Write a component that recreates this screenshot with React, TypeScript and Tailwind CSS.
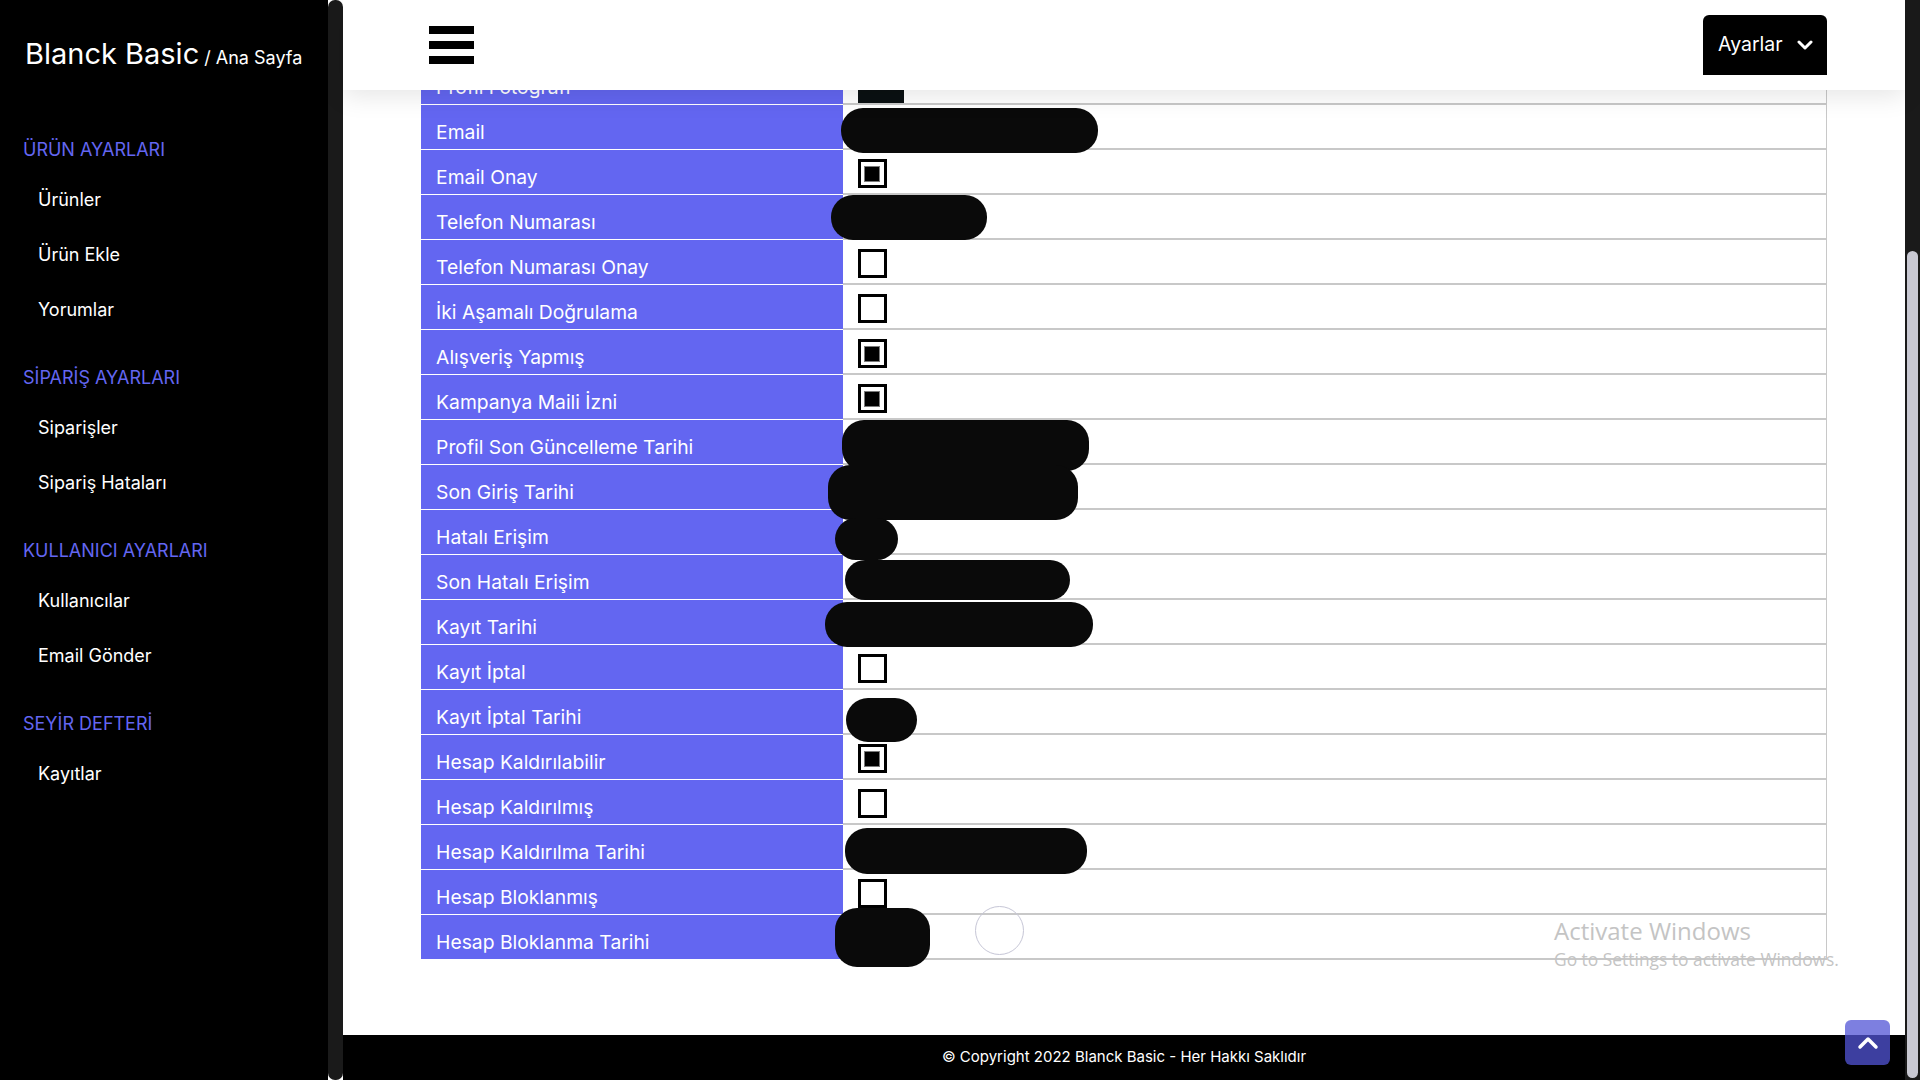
import React from "react";

type Row = {
  label: string;
  kind: "photo" | "text" | "check";
  checked?: boolean;
};

const rows: Row[] = [
  { label: "Profil Fotoğrafı", kind: "photo" },
  { label: "Email", kind: "text" },
  { label: "Email Onay", kind: "check", checked: true },
  { label: "Telefon Numarası", kind: "text" },
  { label: "Telefon Numarası Onay", kind: "check", checked: false },
  { label: "İki Aşamalı Doğrulama", kind: "check", checked: false },
  { label: "Alışveriş Yapmış", kind: "check", checked: true },
  { label: "Kampanya Maili İzni", kind: "check", checked: true },
  { label: "Profil Son Güncelleme Tarihi", kind: "text" },
  { label: "Son Giriş Tarihi", kind: "text" },
  { label: "Hatalı Erişim", kind: "text" },
  { label: "Son Hatalı Erişim", kind: "text" },
  { label: "Kayıt Tarihi", kind: "text" },
  { label: "Kayıt İptal", kind: "check", checked: false },
  { label: "Kayıt İptal Tarihi", kind: "text" },
  { label: "Hesap Kaldırılabilir", kind: "check", checked: true },
  { label: "Hesap Kaldırılmış", kind: "check", checked: false },
  { label: "Hesap Kaldırılma Tarihi", kind: "text" },
  { label: "Hesap Bloklanmış", kind: "check", checked: false },
  { label: "Hesap Bloklanma Tarihi", kind: "text" },
];

// redacted values in the screenshot (left, top, width, height relative to table)
const blots = [
  [420, 48, 257, 45],
  [410, 135, 156, 45],
  [421, 360, 247, 51],
  [407, 405, 250, 55],
  [414, 458, 63, 42],
  [424, 500, 225, 40],
  [404, 542, 268, 45],
  [425, 638, 71, 44],
  [424, 768, 242, 46],
  [414, 848, 95, 59],
];

const groups = [
  { title: "ÜRÜN AYARLARI", items: ["Ürünler", "Ürün Ekle", "Yorumlar"] },
  { title: "SİPARİŞ AYARLARI", items: ["Siparişler", "Sipariş Hataları"] },
  { title: "KULLANICI AYARLARI", items: ["Kullanıcılar", "Email Gönder"] },
  { title: "SEYİR DEFTERİ", items: ["Kayıtlar"] },
];

const Checkbox: React.FC<{ checked?: boolean }> = ({ checked }) => (
  <div className="w-[29px] h-[29px] border-[3px] border-black bg-white flex items-center justify-center">
    {checked && <div className="w-[16px] h-[16px] bg-black border border-[#7a7a7a]" />}
  </div>
);

export default function App() {
  return (
    <div className="relative flex h-screen w-full overflow-hidden bg-white font-['Inter',sans-serif]">
      <aside className="w-[328px] shrink-0 bg-black text-white pt-[34px]">
        <div className="flex items-baseline pl-[25px] h-[40px]">
          <span className="text-[29px] leading-[40px]">Blanck Basic</span>
          <span className="text-[18px] ml-[5px]">/ Ana Sayfa</span>
        </div>
        <ul>
          {groups.map((g, i) => (
            <li key={g.title} className={i === 0 ? "mt-[53px]" : "mt-[18px]"}>
              <h3 className="h-[45px] flex items-center pl-[23px] text-[18px] text-[#6366f1]">{g.title}</h3>
              {g.items.map((it) => (
                <div key={it} className="h-[55px] flex items-center pl-[38px] text-[18px]">
                  {it}
                </div>
              ))}
            </li>
          ))}
        </ul>
      </aside>
      <div className="w-[15px] shrink-0 bg-[#1a1a1a] rounded-[7px]" />

      <main className="flex-1 flex flex-col min-w-0">
        <header className="relative z-20 h-[90px] shrink-0 bg-white flex items-center justify-between pl-[86px] pr-[78px] shadow-[0_6px_24px_rgba(0,0,0,0.1)]">
          <div className="flex flex-col gap-[7px]">
            <span className="block w-[45px] h-[8px] bg-black" />
            <span className="block w-[45px] h-[8px] bg-black" />
            <span className="block w-[45px] h-[8px] bg-black" />
          </div>
          <button className="h-[60px] w-[124px] bg-black text-white rounded-t-[6px] flex items-center pl-[15px] gap-[14px] text-[19.5px]">
            Ayarlar
            <svg width="16" height="12" viewBox="0 0 16 12" fill="none">
              <polyline points="2,3 8,9 14,3" stroke="white" strokeWidth="3" strokeLinecap="round" strokeLinejoin="round" />
            </svg>
          </button>
        </header>

        <div className="flex-1 overflow-hidden">
          <div className="relative w-[90%] mx-auto mt-[-30px]">
            {rows.map((r) => (
              <div key={r.label} className="flex h-[45px]">
                <div className="w-[30%] shrink-0 bg-[#6366f1] text-white text-[19.3px] pl-[15px] pt-[10px] flex items-center border-b border-white">
                  {r.label}
                </div>
                <div className="flex-1 bg-white border-b-2 border-r border-[#c8c8c8] pl-[15px] flex items-start">
                  {r.kind === "check" && (
                    <div className="pt-[9px]">
                      <Checkbox checked={r.checked} />
                    </div>
                  )}
                  {r.kind === "photo" && <div className="self-end w-[46px] h-[40px] bg-[#0a1012]" />}
                </div>
              </div>
            ))}
            {blots.map(([l, t, w, h], i) => (
              <div
                key={i}
                className="absolute z-10 bg-[#0a0a0a] rounded-[22px]"
                style={{ left: l, top: t, width: w, height: h }}
              />
            ))}
            <div className="absolute left-[554px] top-[846px] w-[49px] h-[49px] rounded-full border-[1.5px] border-[#c6c6d6]" />
          </div>
        </div>

        <footer className="h-[45px] shrink-0 bg-black text-white text-[15px] flex items-center justify-center">
          © Copyright 2022 Blanck Basic - Her Hakkı Saklıdır
        </footer>
      </main>

      <div className="w-[15px] shrink-0 bg-[#1a1a1a] flex flex-col pt-[251px] pb-[2px] px-[2px]">
        <div className="flex-1 rounded-full bg-[#c8c8d2]" />
      </div>

      <div className="absolute left-[1554px] top-[914px] text-[#c4c4c4] font-['Open_Sans',sans-serif] pointer-events-none">
        <div className="text-[24px] leading-[33px]">Activate Windows</div>
        <div className="text-[17.4px] leading-[24px]">Go to Settings to activate Windows.</div>
      </div>

      <button className="absolute left-[1845px] top-[1020px] w-[45px] h-[45px] rounded-[6px] bg-[rgba(82,84,214,0.75)] flex items-center justify-center">
        <svg width="22" height="14" viewBox="0 0 22 14" fill="none">
          <polyline points="3,11 11,3 19,11" stroke="white" strokeWidth="3.5" strokeLinecap="round" strokeLinejoin="round" />
        </svg>
      </button>
    </div>
  );
}
